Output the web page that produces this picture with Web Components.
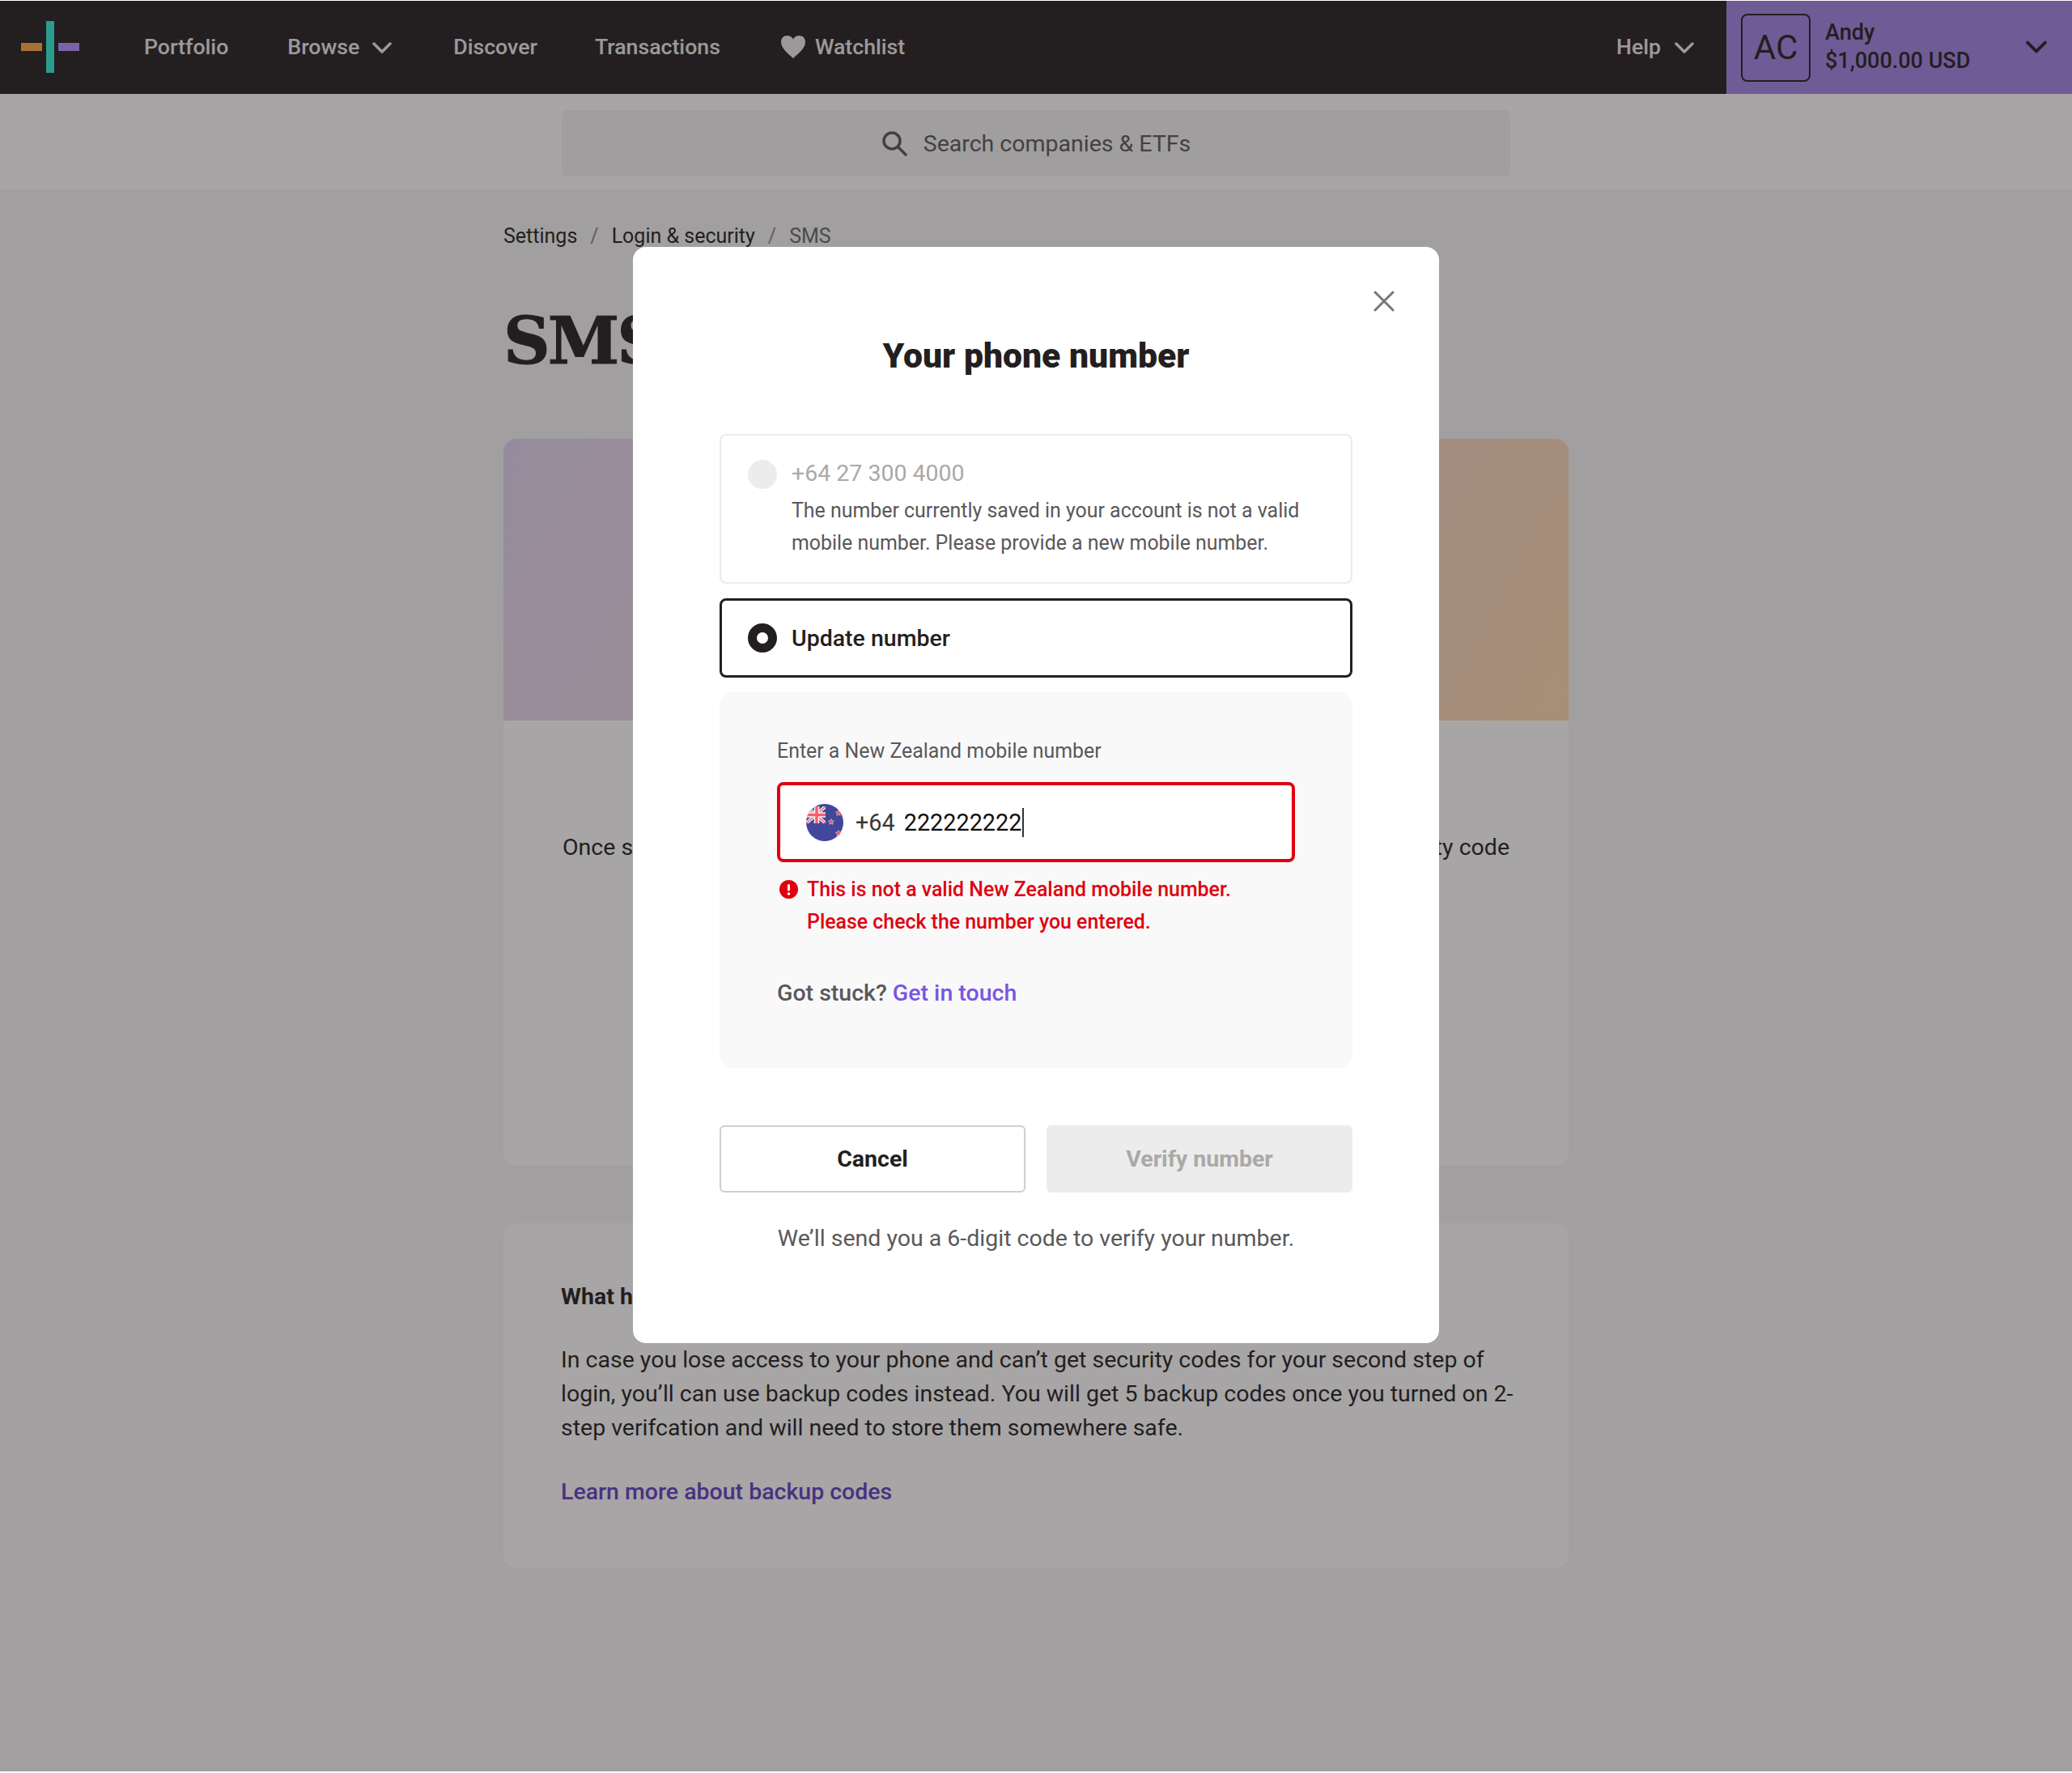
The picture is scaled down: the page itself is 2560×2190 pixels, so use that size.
<!DOCTYPE html>
<html lang="en">
<head>
<meta charset="utf-8">
<title>SMS</title>
<style>
  html { margin: 0; padding: 0; height: 2190px; background: #fff; overflow: hidden; }
  body { position: relative; margin: 1px 0 0; height: 2187px; background: #f5f5f5; font-family: Roboto, "Liberation Sans", sans-serif; color: #231f20; overflow: hidden; }
</style>
</head>
<body>
<top-nav></top-nav>
<search-strip></search-strip>
<sms-page></sms-page>
<modal-backdrop>
  <phone-modal></phone-modal>
</modal-backdrop>

<script>
const chevron = (w, color) => `<svg width="${w}" height="${Math.round(w * 0.6)}" viewBox="0 0 24 14" fill="none" stroke="${color}" stroke-width="3.5" stroke-linecap="round" stroke-linejoin="round"><path d="M2 2l10 10L22 2"/></svg>`;

class TopNav extends HTMLElement {
    constructor() {
        super();
        this.shadowDOM = this.attachShadow({mode: "open"});
        this.shadowDOM.innerHTML = `
            <style>
            :host { display: flex; height: 115px; background: #231f20; color: #ebebeb; font-size: 26.7px; font-weight: 500; }
            .logo { display: flex; align-items: center; gap: 5px; padding: 0 0 2px 26px; width: 152px; box-sizing: border-box; }
            .logo i { display: block; }
            .o { width: 26px; height: 10px; background: #ffaa3f; }
            .t { width: 10px; height: 64px; background: #2ff1d9; }
            .p { width: 26px; height: 10px; background: #b691ff; }
            nav { display: flex; align-items: center; flex: 1; padding-bottom: 2px; }
            nav a { display: flex; align-items: center; white-space: nowrap; }
            nav a svg { display: block; }
            .first { margin-left: 26px; }
            .browse { margin-left: 73px; }
            .browse svg { margin: 2px 0 0 16px; }
            .help svg { margin: 2px 0 0 17px; }
            .discover { margin-left: 76px; }
            .trans { margin-left: 71px; }
            .watch { margin-left: 75px; }
            .watch svg { margin-right: 12px; }
            .help { margin-left: auto; margin-right: 40px; }
            .account { width: 427px; background: #a284e4; color: #231f20; display: flex; align-items: center; padding-left: 18px; box-sizing: border-box; }
            .avatar { width: 86px; height: 84px; box-sizing: border-box; border: 2px solid #231f20; border-radius: 8px; display: flex; align-items: center; justify-content: center; font-size: 42px; font-weight: 400; }
            .who { margin: 0 0 2px 18px; line-height: 35px; flex: 1; font-size: 27px; }
            .account svg { margin: 0 31px 2px 0; display: block; }
            </style>
            <div class="logo"><i class="o"></i><i class="t"></i><i class="p"></i></div>
            <nav>
                <a class="first">Portfolio</a>
                <a class="browse">Browse ${chevron(24, "#ebebeb")}</a>
                <a class="discover">Discover</a>
                <a class="trans">Transactions</a>
                <a class="watch"><svg width="30" height="28" viewBox="0 0 30 28"><path fill="#ebebeb" d="M15 28C6 20 0 15 0 7.600 0 3 3.400 0 7.600 0 10.800 0 13.600 1.600 15 4.400 16.400 1.600 19.200 0 22.400 0 26.600 0 30 3 30 7.600 30 15 24 20 15 28z"/></svg>Watchlist</a>
                <a class="help">Help ${chevron(24, "#ebebeb")}</a>
            </nav>
            <div class="account">
                <div class="avatar">AC</div>
                <div class="who">Andy<br>$1,000.00 USD</div>
                ${chevron(26, "#231f20")}
            </div>
        `;
    }
}
customElements.define("top-nav", TopNav);

class SearchStrip extends HTMLElement {
    constructor() {
        super();
        this.shadowDOM = this.attachShadow({mode: "open"});
        this.shadowDOM.innerHTML = `
            <style>
            :host { display: flex; justify-content: center; height: 120px; padding-top: 20px; box-sizing: border-box; background: #fff; border-bottom: 2px solid #f3f3f3; }
            .box { width: 1172px; height: 82px; background: #f4f3f3; border-radius: 6px; display: flex; align-items: center; justify-content: center; gap: 20px; color: #5a5859; font-size: 28.5px; }
            svg { display: block; }
            </style>
            <div class="box">
                <svg width="32" height="32" viewBox="0 0 32 32" fill="none" stroke="#5a5859" stroke-width="3.500"><circle cx="13" cy="13" r="10"/><path d="M20.500 20.500L30 30" stroke-linecap="round"/></svg>
                <span>Search companies &amp; ETFs</span>
            </div>
        `;
    }
}
customElements.define("search-strip", SearchStrip);

class SmsPage extends HTMLElement {
    constructor() {
        super();
        this.shadowDOM = this.attachShadow({mode: "open"});
        this.shadowDOM.innerHTML = `
            <style>
            :host { display: block; width: 1316px; margin: 0 auto; color: #231f20; }
            .crumbs { display: flex; align-items: center; height: 40px; margin-top: 35px; font-size: 25px; gap: 16px; }
            .crumbs span.sep { color: #8a8888; }
            .crumbs .here { color: #6a6868; }
            h1 { font-family: "DejaVu Serif", "Liberation Serif", serif; font-size: 80px; font-weight: 700; line-height: 90px; margin: 65px 0 0; letter-spacing: -3px; -webkit-text-stroke: 1px #231f20; }
            .card { background: #fff; border-radius: 16px; overflow: hidden; }
            .setup { margin-top: 76px; height: 898px; }
            .hero { height: 348px; background: linear-gradient(118deg, #e3d6f0 0%, #f0d7e4 38%, #f5d6c4 68%, #ffd9b0 100%); }
            .setup p { margin: 136px 0 0; font-size: 28.5px; line-height: 42px; text-align: center; padding: 0 40px; white-space: nowrap; }
            .backup { margin-top: 71px; height: 426px; padding: 70px 58px 0 71px; box-sizing: border-box; font-size: 28.5px; line-height: 42px; }
            .backup h2 { font-size: 28.5px; font-weight: 700; line-height: 42px; margin: 0 0 36px; }
            .backup p { margin: 0 0 37px; }
            .backup a { color: #6240c0; font-weight: 500; }
            </style>
            <div class="crumbs"><span>Settings</span><span class="sep">/</span><span>Login &amp; security</span><span class="sep">/</span><span class="here">SMS</span></div>
            <h1>SMS</h1>
            <div class="card setup">
                <div class="hero"></div>
                <p>Once set up, each time you log in to your account we'll text your phone a 6-digit security code</p>
            </div>
            <div class="card backup">
                <h2>What happens if I lose my phone?</h2>
                <p>In case you lose access to your phone and can’t get security codes for your second step of login, you’ll can use backup codes instead. You will get 5 backup codes once you turned on 2-step verifcation and will need to store them somewhere safe.</p>
                <a>Learn more about backup codes</a>
            </div>
        `;
    }
}
customElements.define("sms-page", SmsPage);

class ModalBackdrop extends HTMLElement {
    constructor() {
        super();
        this.shadowDOM = this.attachShadow({mode: "open"});
        this.shadowDOM.innerHTML = `
            <style>
            :host { position: absolute; inset: 0; display: flex; justify-content: center; align-items: flex-start; padding-top: 304px; box-sizing: border-box; background: rgba(35, 31, 32, 0.4); }
            </style>
            <slot></slot>
        `;
    }
}
customElements.define("modal-backdrop", ModalBackdrop);

class PhoneOption extends HTMLElement {
    constructor() {
        super();
        this.shadowDOM = this.attachShadow({mode: "open"});
        this.shadowDOM.innerHTML = `
            <style>
            :host { display: flex; gap: 18px; box-sizing: border-box; border: 2px solid #ebebeb; border-radius: 8px; padding: 30px 33px; background: #fff; }
            :host([selected]) { border: 3px solid #231f20; padding: 0 32px; height: 98px; align-items: center; }
            .radio { flex: none; width: 36px; height: 36px; border-radius: 50%; background: #ececec; box-sizing: border-box; }
            :host([selected]) .radio { background: #fff; border: 11px solid #231f20; }
            </style>
            <div class="radio"></div>
            <div><slot></slot></div>
        `;
    }
}
customElements.define("phone-option", PhoneOption);

class PhoneInput extends HTMLElement {
    constructor() {
        super();
        this.shadowDOM = this.attachShadow({mode: "open"});
        this.shadowDOM.innerHTML = `
            <style>
            :host { display: flex; align-items: center; height: 99px; box-sizing: border-box; border: 4px solid #e0000f; border-radius: 8px; background: #fff; padding-left: 32px; font-size: 28.8px; }
            svg { display: block; flex: none; }
            .code { margin-left: 15px; color: #3a3738; }
            .value { margin-left: 11px; color: #111; border-right: 2px solid #333; line-height: 36px; padding-right: 1px; }
            </style>
            <svg width="46" height="46" viewBox="0 0 46 46">
                <defs>
                    <clipPath id="c"><circle cx="23" cy="23" r="23"/></clipPath>
                    <clipPath id="j"><rect x="0" y="3" width="24" height="21"/></clipPath>
                </defs>
                <g clip-path="url(#c)">
                    <rect width="46" height="46" fill="#41479b"/>
                    <g clip-path="url(#j)">
                        <path d="M0 3L24 24M24 3L0 24" stroke="#f5f5f5" stroke-width="4"/>
                        <path d="M0 3L24 24M24 3L0 24" stroke="#ff5c6c" stroke-width="1.500"/>
                        <path d="M13 0V26M0 13.500H26" stroke="#f5f5f5" stroke-width="6.500"/>
                        <path d="M13 0V26M0 13.500H26" stroke="#ff5c6c" stroke-width="3.500"/>
                    </g>
                </g>
                <g fill="#ff4b55" stroke="#f5f5f5" stroke-width=".500">
                    <path d="M31 18.500l1 2.400 2.600.2-2 1.700.6 2.500-2.200-1.300-2.200 1.300.6-2.500-2-1.700 2.600-.2z"/>
                    <path d="M40 7.500l1 2.400 2.600.2-2 1.700.6 2.500-2.200-1.300-2.200 1.300.6-2.500-2-1.700 2.600-.2z"/>
                    <path d="M40 32.500l1 2.400 2.600.2-2 1.700.6 2.500-2.200-1.300-2.200 1.300.6-2.500-2-1.700 2.600-.2z"/>
                </g>
            </svg>
            <span class="code">+64</span>
            <span class="value">222222222</span>
        `;
    }
}
customElements.define("phone-input", PhoneInput);

class PhoneModal extends HTMLElement {
    constructor() {
        super();
        this.shadowDOM = this.attachShadow({mode: "open"});
        this.shadowDOM.innerHTML = `
            <style>
            :host { display: block; position: relative; width: 996px; height: 1354px; box-sizing: border-box; padding: 0 107px; background: #fff; border-radius: 16px; color: #231f20; }
            .close { position: absolute; top: 54px; right: 55px; display: block; }
            h2 { margin: 0; padding-top: 106px; height: 231px; box-sizing: border-box; text-align: center; font-size: 42.7px; line-height: 56px; font-weight: 900; }
            .num { font-size: 28.5px; line-height: 34px; color: #a9a9a9; }
            .desc { font-size: 24.9px; line-height: 40px; color: #5a5859; margin-top: 9px; }
            phone-option { margin-bottom: 18px; }
            phone-option.saved { height: 185px; }
            .label { display: block; padding-top: 2px; font-size: 28.5px; font-weight: 500; line-height: 36px; }
            .panel { height: 464px; box-sizing: border-box; background: #f9f9f9; border-radius: 16px; padding: 53px 71px 0; }
            .panel-label { font-size: 24.9px; line-height: 40px; color: #5a5859; margin-bottom: 18px; }
            .error { display: flex; gap: 11px; margin-top: 14px; padding-left: 3px; color: #e0000f; font-size: 24.9px; line-height: 40px; font-weight: 500; }
            .error svg { flex: none; margin-top: 8px; display: block; }
            .stuck { margin-top: 48px; font-size: 28.5px; line-height: 40px; color: #5a5859; font-weight: 500; }
            .stuck a { color: #7856e0; }
            .buttons { display: grid; grid-template-columns: 1fr 1fr; gap: 26px; margin-top: 71px; }
            .btn { height: 83px; box-sizing: border-box; border-radius: 6px; display: flex; align-items: center; justify-content: center; font-size: 28.5px; font-weight: 700; }
            .cancel { border: 2px solid #cfcfcf; }
            .verify { background: #ececec; color: #a9a9a9; }
            .note { margin-top: 37px; text-align: center; font-size: 28.5px; line-height: 40px; color: #5a5859; }
            </style>
            <svg class="close" width="26" height="26" viewBox="0 0 26 26" fill="none" stroke="#777" stroke-width="3" stroke-linecap="round"><path d="M2 2l22 22M24 2L2 24"/></svg>
            <h2>Your phone number</h2>
            <phone-option class="saved">
                <div class="num">+64 27 300 4000</div>
                <div class="desc">The number currently saved in your account is not a valid mobile number. Please provide a new mobile number.</div>
            </phone-option>
            <phone-option selected><span class="label">Update number</span></phone-option>
            <div class="panel">
                <div class="panel-label">Enter a New Zealand mobile number</div>
                <phone-input></phone-input>
                <div class="error">
                    <svg width="23" height="23" viewBox="0 0 23 23"><circle cx="11.500" cy="11.500" r="11.500" fill="#e0000f"/><rect x="10" y="5" width="3" height="8.500" rx="1.500" fill="#fff"/><circle cx="11.500" cy="17" r="1.800" fill="#fff"/></svg>
                    <div>This is not a valid New Zealand mobile number.<br>Please check the number you entered.</div>
                </div>
                <div class="stuck">Got stuck? <a>Get in touch</a></div>
            </div>
            <div class="buttons">
                <div class="btn cancel">Cancel</div>
                <div class="btn verify">Verify number</div>
            </div>
            <div class="note">We’ll send you a 6-digit code to verify your number.</div>
        `;
    }
}
customElements.define("phone-modal", PhoneModal);
</script>
</body>
</html>
